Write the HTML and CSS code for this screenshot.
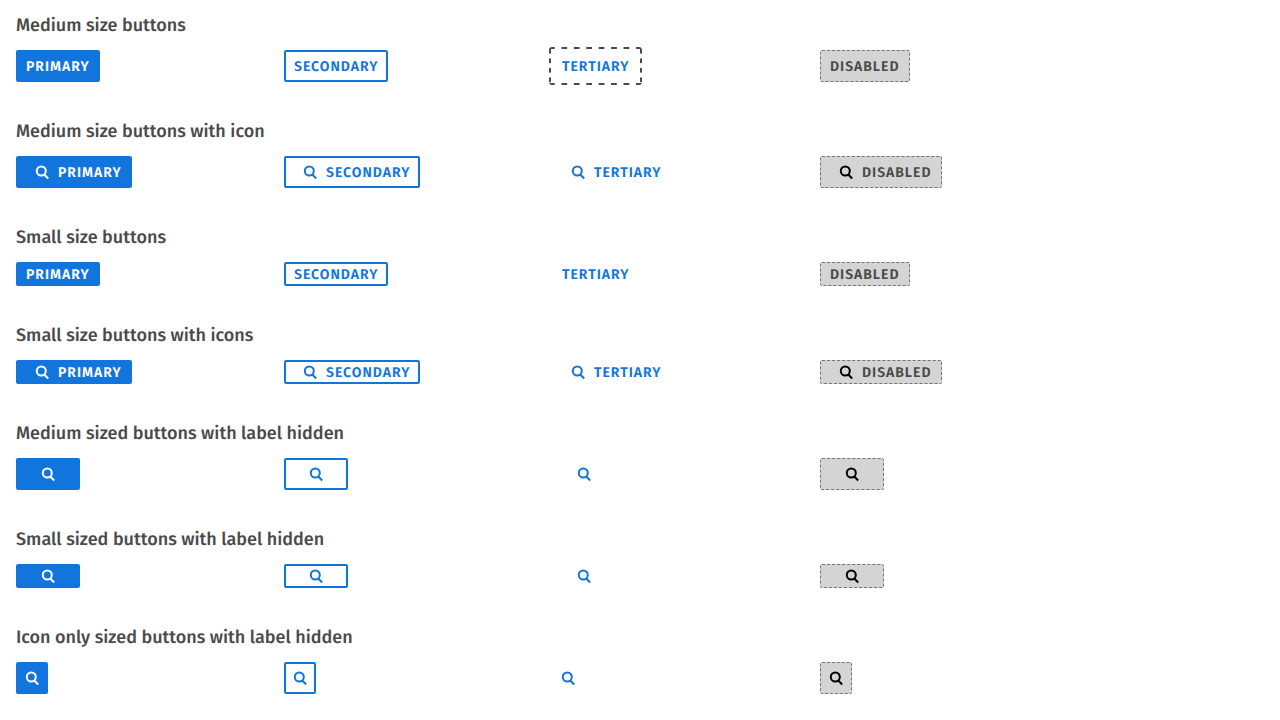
FILE: index.html
```
<!DOCTYPE html>
<html lang="en">
<head>
<meta charset="utf-8">
<title>Buttons</title>
<link rel="stylesheet" href="styles.css">
</head>
<body>
<svg class="sprite" aria-hidden="true">
  <symbol id="search" viewBox="0 0 16 16">
    <g fill="none" stroke="currentColor" stroke-width="2">
      <circle cx="7.3" cy="7" r="4.5"/>
      <path d="M10 10.3 14.2 14.5"/>
    </g>
  </symbol>
</svg>
<main class="page">
  <section class="group">
    <h2 class="title">Medium size buttons</h2>
    <div class="row">
      <div><button class="btn primary">Primary</button></div>
      <div><button class="btn secondary">Secondary</button></div>
      <div><button class="btn tertiary focused">Tertiary</button></div>
      <div><button class="btn" disabled>Disabled</button></div>
    </div>
  </section>
  <section class="group">
    <h2 class="title">Medium size buttons with icon</h2>
    <div class="row">
      <div><button class="btn primary"><svg class="icon"><use href="#search"/></svg>Primary</button></div>
      <div><button class="btn secondary"><svg class="icon"><use href="#search"/></svg>Secondary</button></div>
      <div><button class="btn tertiary"><svg class="icon"><use href="#search"/></svg>Tertiary</button></div>
      <div><button class="btn" disabled><svg class="icon"><use href="#search"/></svg>Disabled</button></div>
    </div>
  </section>
  <section class="group">
    <h2 class="title">Small size buttons</h2>
    <div class="row">
      <div><button class="btn small primary">Primary</button></div>
      <div><button class="btn small secondary">Secondary</button></div>
      <div><button class="btn small tertiary">Tertiary</button></div>
      <div><button class="btn small" disabled>Disabled</button></div>
    </div>
  </section>
  <section class="group">
    <h2 class="title">Small size buttons with icons</h2>
    <div class="row">
      <div><button class="btn small primary"><svg class="icon"><use href="#search"/></svg>Primary</button></div>
      <div><button class="btn small secondary"><svg class="icon"><use href="#search"/></svg>Secondary</button></div>
      <div><button class="btn small tertiary"><svg class="icon"><use href="#search"/></svg>Tertiary</button></div>
      <div><button class="btn small" disabled><svg class="icon"><use href="#search"/></svg>Disabled</button></div>
    </div>
  </section>
  <section class="group">
    <h2 class="title">Medium sized buttons with label hidden</h2>
    <div class="row">
      <div><button class="btn wide primary" aria-label="Primary"><svg class="icon"><use href="#search"/></svg></button></div>
      <div><button class="btn wide secondary" aria-label="Secondary"><svg class="icon"><use href="#search"/></svg></button></div>
      <div><button class="btn wide tertiary" aria-label="Tertiary"><svg class="icon"><use href="#search"/></svg></button></div>
      <div><button class="btn wide" aria-label="Disabled" disabled><svg class="icon"><use href="#search"/></svg></button></div>
    </div>
  </section>
  <section class="group">
    <h2 class="title">Small sized buttons with label hidden</h2>
    <div class="row">
      <div><button class="btn small wide primary" aria-label="Primary"><svg class="icon"><use href="#search"/></svg></button></div>
      <div><button class="btn small wide secondary" aria-label="Secondary"><svg class="icon"><use href="#search"/></svg></button></div>
      <div><button class="btn small wide tertiary" aria-label="Tertiary"><svg class="icon"><use href="#search"/></svg></button></div>
      <div><button class="btn small wide" aria-label="Disabled" disabled><svg class="icon"><use href="#search"/></svg></button></div>
    </div>
  </section>
  <section class="group">
    <h2 class="title">Icon only sized buttons with label hidden</h2>
    <div class="row">
      <div><button class="btn square primary" aria-label="Primary"><svg class="icon"><use href="#search"/></svg></button></div>
      <div><button class="btn square secondary" aria-label="Secondary"><svg class="icon"><use href="#search"/></svg></button></div>
      <div><button class="btn square tertiary" aria-label="Tertiary"><svg class="icon"><use href="#search"/></svg></button></div>
      <div><button class="btn square" aria-label="Disabled" disabled><svg class="icon"><use href="#search"/></svg></button></div>
    </div>
  </section>
</main>
</body>
</html>
```
FILE: styles.css
```
* {
  box-sizing: border-box;
}

body {
  margin: 0;
  background: #fff;
  color: #4a4a4a;
  font-family: "Fira Sans", "Noto Sans", sans-serif;
  text-rendering: geometricPrecision;
}

.sprite {
  display: none;
}

.page {
  display: flex;
  flex-direction: column;
  gap: 36px;
  max-width: 1088px;
  padding: 12px 16px 0;
}

.title {
  margin: 0 0 12px;
  font-size: 18px;
  font-weight: 500;
  line-height: 26px;
}

.row {
  display: grid;
  grid-template-columns: repeat(4, minmax(0, 1fr));
  gap: 16px;
}

.row > div {
  display: flex;
}

.btn {
  position: relative;
  display: inline-flex;
  align-items: center;
  justify-content: center;
  height: 32px;
  padding: 0 8px;
  border: 2px solid transparent;
  border-radius: 2px;
  background: transparent;
  font-family: inherit;
  font-size: 14px;
  font-weight: 600;
  line-height: 21px;
  letter-spacing: 1px;
  text-transform: uppercase;
  text-rendering: inherit;
  white-space: nowrap;
}

.icon {
  flex: none;
  width: 16px;
  height: 16px;
  margin: 0 8px;
}

.small {
  height: 24px;
}

.wide {
  width: 64px;
}

.square {
  width: 32px;
  padding: 0;
}

.square .icon {
  margin: 0;
}

.primary {
  border-color: #1175dd;
  background: #1175dd;
  color: #fff;
}

.secondary {
  border-color: #1175dd;
  background: #fff;
  color: #1175dd;
}

.tertiary {
  color: #1175dd;
}

.focused {
  outline: none;
}

/* Focus ring with widely spaced dashes, one background layer per side */
.focused::after {
  --across: linear-gradient(90deg, #4a4a4a 6px, transparent 6px);
  --down: linear-gradient(transparent 25%, #4a4a4a 25% 75%, transparent 75%);
  --step: calc((100% - 6px) / 7);
  content: "";
  position: absolute;
  inset: -5px;
  border-radius: 3px;
  background-image: var(--across), var(--across), var(--down), var(--down);
  background-position: 0 0, 0 100%, 0 0, 100% 0;
  background-repeat: repeat-x, repeat-x, repeat-y, repeat-y;
  background-size: var(--step) 2px, var(--step) 2px, 2px 25%, 2px 25%;
}

.btn:disabled {
  padding: 0 9px;
  border: 1px dashed #737373;
  background: #d4d4d4;
  color: #4a4a4a;
}

.square:disabled {
  padding: 0;
}

.btn:disabled .icon {
  color: #000;
}
```
